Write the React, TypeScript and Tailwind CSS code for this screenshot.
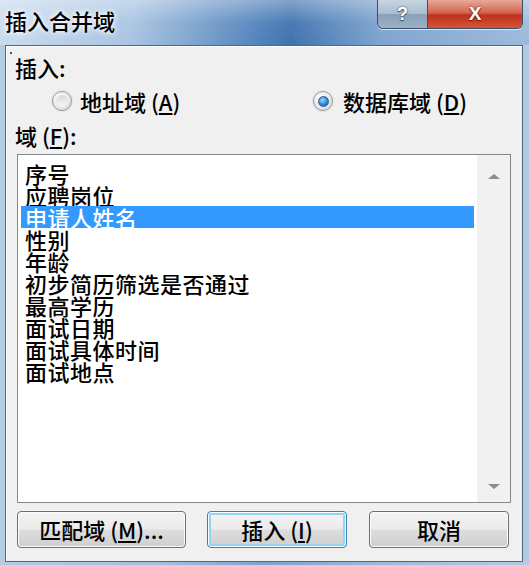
import React from "react";

const fields = ["序号", "应聘岗位", "申请人姓名", "性别", "年龄", "初步简历筛选是否通过", "最高学历", "面试日期", "面试具体时间", "面试地点"];

function Radio(props: { checked: boolean }) {
  const { checked } = props;
  return (
    <span className="flex h-[20px] w-[20px] shrink-0 items-center justify-center rounded-full border border-[#9a9a9a] bg-[radial-gradient(circle_at_40%_35%,#ffffff_0%,#e6e6e6_60%,#c9c9c9_100%)] shadow-[0_0_0_1px_#e4e4e4]">
      {checked ? (
        <span className="h-[11px] w-[11px] rounded-full border border-[#1b5f9a] bg-[radial-gradient(circle_at_40%_35%,#9fd6ff_0%,#2f8ad4_55%,#155a9a_100%)]" />
      ) : (
        <span className="h-[12px] w-[12px] rounded-full bg-[linear-gradient(180deg,#d9d9d9,#f7f7f7)]" />
      )}
    </span>
  );
}

function Btn(props: { w: string; primary?: boolean; children: React.ReactNode }) {
  const { w, primary, children } = props;
  return (
    <button
      className={
        (primary
          ? "border-[#3c7fb1] shadow-[inset_0_0_0_1px_#ffffff,inset_0_0_0_3px_#8fd5f5] "
          : "border-[#707070] shadow-[inset_0_0_0_1px_#fbfbfb] ") +
        w +
        " flex h-[37px] items-center justify-center rounded-[4px] border bg-[linear-gradient(180deg,#f3f3f3_0%,#ebebeb_48%,#dddddd_52%,#cfcfcf_100%)] text-[22px] font-medium text-black"
      }
    >
      {children}
    </button>
  );
}

export default function App() {
  return (
    <div className="flex h-[565px] w-[529px] flex-col overflow-hidden bg-[linear-gradient(90deg,#b4cbe4_0%,#a3bfde_30%,#7ea3cc_50%,#9fbbdb_75%,#b3cbe4_100%)] font-['Noto_Sans_CJK_SC','Noto_Sans',sans-serif]">
      {/* title bar */}
      <div className="relative flex h-[45px] shrink-0 items-start bg-[linear-gradient(90deg,#c9dbee_0%,#a9c4e2_25%,#5585bd_48%,#3f73ae_55%,#7ea4cf_72%,#9dbadb_100%)]">
        <div className="pointer-events-none absolute inset-0 bg-[linear-gradient(180deg,rgba(255,255,255,0.35)_0%,rgba(255,255,255,0.05)_50%,rgba(255,255,255,0)_100%)]" />
        <span className="relative ml-[5px] mt-[6px] text-[22px] font-medium leading-[28px] text-black [text-shadow:0_0_8px_#ffffff,0_0_4px_#ffffff]">
          插入合并域
        </span>
        <div className="relative ml-auto mr-[6px] flex h-[29px] overflow-hidden rounded-b-[6px] border border-t-0 border-[#3d4f66] shadow-[0_1px_0_#d8e6f4]">
          <div className="flex w-[50px] items-center justify-center border-r border-[#3d4f66] bg-[linear-gradient(180deg,#c8d5e3_0%,#a9bccf_50%,#8aa0b8_52%,#9cb1c8_100%)]">
            <span className="font-['Liberation_Sans',sans-serif] text-[18px] font-bold leading-[22px] text-white [text-shadow:0_0_2px_#33445a,0_1px_1px_#33445a]">?</span>
          </div>
          <div className="flex w-[94px] items-center justify-center bg-[linear-gradient(180deg,#e9a89a_0%,#d2654f_45%,#c0301a_55%,#d4553a_100%)]">
            <span className="font-['Liberation_Sans',sans-serif] text-[19px] font-bold leading-[22px] text-white [text-shadow:0_0_2px_#6a1a10,0_1px_1px_#6a1a10]">X</span>
          </div>
        </div>
      </div>

      {/* client area */}
      <div className="relative ml-[5px] mr-[6px] flex h-[517px] flex-col border border-[#52677e] bg-[#f0f0f0] pl-[9px] pt-[9px] shadow-[inset_1px_1px_0_#ffffff]">
        <span className="absolute left-[4px] top-[6px] h-[2px] w-[2px] bg-[#555]" />
        <div className="text-[22px] font-medium leading-[24px] text-black">插入:</div>

        <div className="mt-[11px] flex h-[22px] items-center">
          <div className="ml-[37px] flex w-[261px] items-center">
            <Radio checked={false} />
            <span className="ml-[8px] text-[22px] font-medium leading-[22px] text-black">
              地址域 (<u>A</u>)
            </span>
          </div>
          <div className="flex items-center">
            <Radio checked={true} />
            <span className="ml-[10px] text-[22px] font-medium leading-[22px] text-black">
              数据库域 (<u>D</u>)
            </span>
          </div>
        </div>

        <div className="mt-[11px] text-[22px] font-medium leading-[24px] text-black">
          域 (<u>F</u>):
        </div>

        <div className="ml-[2px] mt-[7px] flex h-[349px] w-[494px] border border-[#828790] bg-white">
          <div className="flex w-[456px] flex-col pl-[3px] pt-[7px]">
            {fields.map((f, i) => (
              <div
                key={i}
                className={
                  (i === 2 ? "bg-[#3399ff] text-white " : "text-black ") +
                  "h-[22px] w-[453px] whitespace-nowrap pl-[4px] text-[22px] font-medium leading-[22px] tracking-[0.5px]"
                }
              >
                {f}
              </div>
            ))}
          </div>
          <div className="ml-[3px] flex w-[33px] flex-col items-center justify-between bg-[#f1f1f1] pb-[13px] pt-[19px]">
            <span className="h-0 w-0 border-x-[6px] border-b-[5px] border-x-transparent border-b-[#8c8c8c]" />
            <span className="h-0 w-0 border-x-[6px] border-t-[5px] border-x-transparent border-t-[#8c8c8c]" />
          </div>
        </div>

        <div className="ml-[2px] mt-[8px] flex items-center">
          <Btn w="w-[169px]">
            匹配域 (<u>M</u>)...
          </Btn>
          <div className="ml-[21px]">
            <Btn w="w-[140px]" primary>
              插入 (<u>I</u>)
            </Btn>
          </div>
          <div className="ml-[22px]">
            <Btn w="w-[140px]">取消</Btn>
          </div>
        </div>
      </div>
    </div>
  );
}
